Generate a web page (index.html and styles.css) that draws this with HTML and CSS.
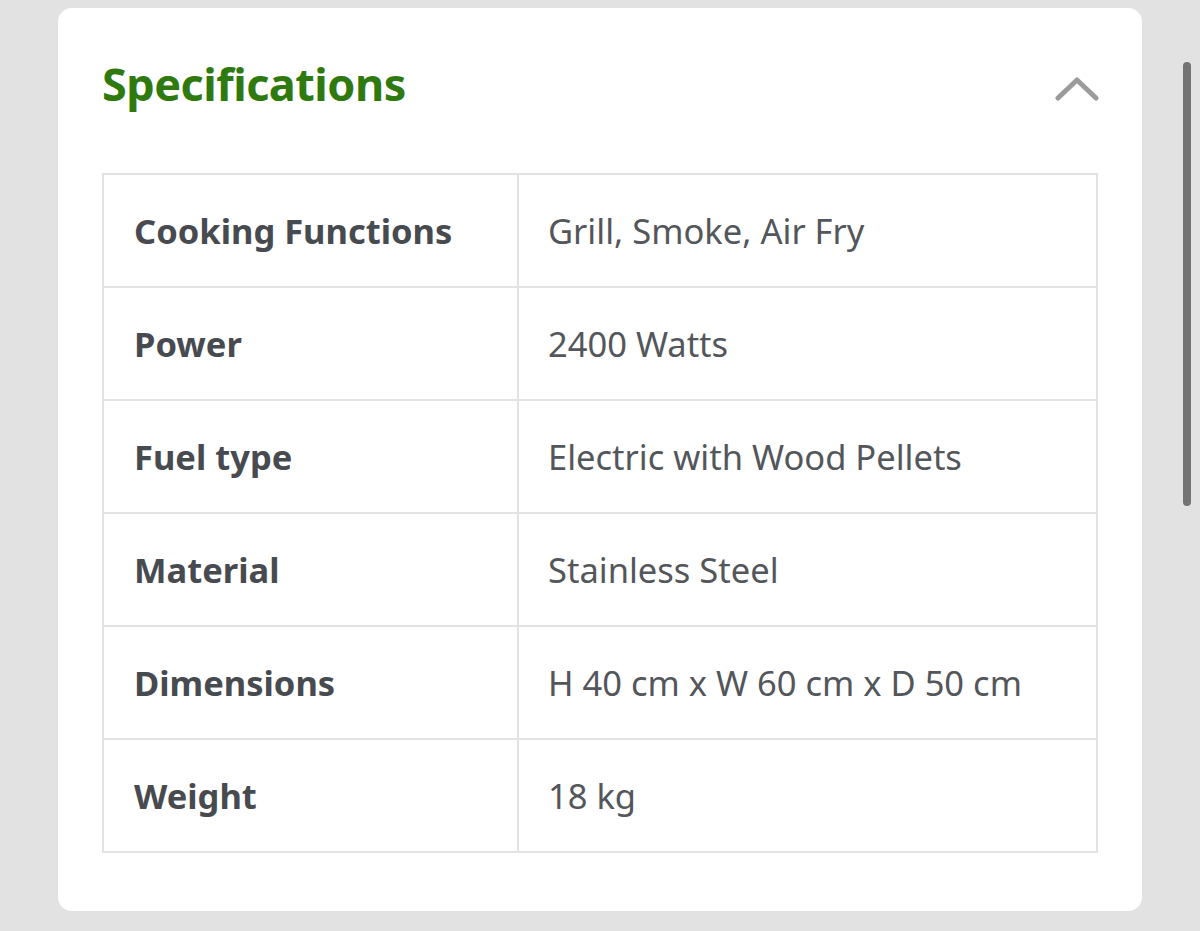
FILE: index.html
```html
<!DOCTYPE html>
<html lang="en">
<head>
<meta charset="utf-8">
<title>Specifications</title>
<link rel="stylesheet" href="styles.css">
</head>
<body>
<div class="page">
  <section class="card">
    <header class="card-head">
      <h2 class="title">Specifications</h2>
      <svg class="chevron" width="44" height="28" viewBox="0 0 44 28" aria-hidden="true">
        <path d="M3 24 L22 6 L41 24" fill="none" stroke="#9b9b9b" stroke-width="5" stroke-linecap="round" stroke-linejoin="round"/>
      </svg>
    </header>
    <table class="specs">
      <tbody>
        <tr><th>Cooking Functions</th><td>Grill, Smoke, Air Fry</td></tr>
        <tr><th>Power</th><td>2400 Watts</td></tr>
        <tr><th>Fuel type</th><td>Electric with Wood Pellets</td></tr>
        <tr><th>Material</th><td>Stainless Steel</td></tr>
        <tr><th>Dimensions</th><td>H 40 cm x W 60 cm x D 50 cm</td></tr>
        <tr><th>Weight</th><td>18 kg</td></tr>
      </tbody>
    </table>
  </section>
  <div class="scrollbar"><div class="thumb"></div></div>
</div>
</body>
</html>
```

FILE: styles.css
```css
* { box-sizing: border-box; }
html, body {
  margin: 0;
  padding: 0;
  background: #e2e2e2;
}
body {
  font-family: "Noto Sans", "Open Sans", sans-serif;
  width: 1200px;
  height: 931px;
  overflow: hidden;
}
.page {
  display: flex;
  align-items: flex-start;
  padding: 8px 0 0 58px;
}
.card {
  width: 1084px;
  height: 903px;
  background: #ffffff;
  border-radius: 14px;
  padding: 0 44px 58px 44px;
}
.card-head {
  height: 165px;
  display: flex;
  justify-content: space-between;
  align-items: flex-start;
}
.title {
  margin: 0;
  padding-top: 46px;
  font-family: "Noto Sans", "Open Sans", sans-serif;
  font-weight: 700;
  font-size: 45px;
  line-height: 60px;
  color: #2f7a0f;
  letter-spacing: -0.5px;
}
.chevron {
  margin-top: 66px;
  margin-right: -1px;
}
.specs {
  width: 996px;
  border-collapse: collapse;
  border: 2px solid #e3e3e3;
  table-layout: fixed;
}
.specs th, .specs td {
  border: 2px solid #e3e3e3;
  height: 113px;
  padding: 0 0 0 30px;
  text-align: left;
  vertical-align: middle;
  font-size: 34.5px;
  color: #474a4f;
}
.specs th {
  width: 415px;
  font-weight: 700;
}
.specs td {
  font-weight: 400;
  padding-left: 29px;
  color: #53565a;
}
.scrollbar {
  width: 58px;
  display: flex;
  justify-content: flex-end;
  padding-right: 9px;
  padding-top: 54px;
}
.thumb {
  width: 8px;
  height: 444px;
  background: #737373;
  border-radius: 4px;
}
```
